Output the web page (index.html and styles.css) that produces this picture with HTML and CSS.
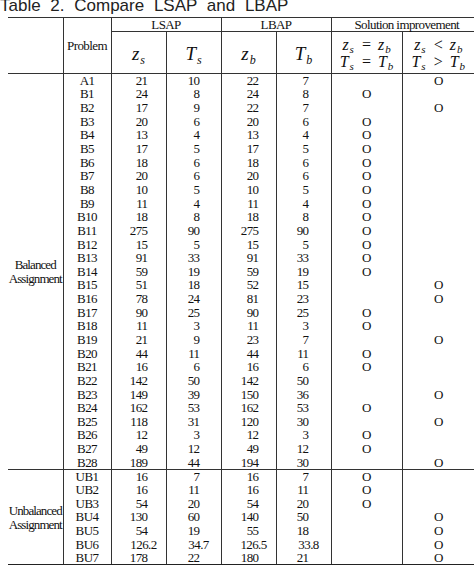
FILE: index.html
```html
<!DOCTYPE html>
<html>
<head>
<meta charset="utf-8">
<link rel="stylesheet" href="styles.css">
</head>
<body>
<div class="title">Table 2. Compare LSAP and LBAP</div>
<table class="tbl">
<colgroup>
<col class="c0"><col class="c1"><col class="cn"><col class="cn"><col class="cn"><col class="cn"><col class="c6"><col class="c7">
</colgroup>
<thead>
<tr class="h1">
<th class="blank" rowspan="2"></th>
<th class="prob" rowspan="2">Problem</th>
<th class="grp" colspan="2">LSAP</th>
<th class="grp" colspan="2">LBAP</th>
<th class="grp sol" colspan="2">Solution improvement</th>
</tr>
<tr class="h2">
<th class="var"><i>z</i><sub>s</sub></th>
<th class="var"><i>T</i><sub>s</sub></th>
<th class="var"><i>z</i><sub>b</sub></th>
<th class="var"><i>T</i><sub>b</sub></th>
<th class="eqc"><div class="eqn"><i>z</i><sub>s</sub><span class="op">=</span><i>z</i><sub>b</sub></div><div class="eqn"><i>T</i><sub>s</sub><span class="op">=</span><i>T</i><sub>b</sub></div></th>
<th class="eqc last"><div class="eqn"><i>z</i><sub>s</sub><span class="op">&lt;</span><i>z</i><sub>b</sub></div><div class="eqn"><i>T</i><sub>s</sub><span class="op">&gt;</span><i>T</i><sub>b</sub></div></th>
</tr>
</thead>
<tbody>
<tr><td class="label" rowspan="29">Balanced<br>Assignment</td><td>A1</td><td>21</td><td>10</td><td>22</td><td>7</td><td></td><td>O</td></tr>
<tr><td>B1</td><td>24</td><td>8</td><td>24</td><td>8</td><td>O</td><td></td></tr>
<tr><td>B2</td><td>17</td><td>9</td><td>22</td><td>7</td><td></td><td>O</td></tr>
<tr><td>B3</td><td>20</td><td>6</td><td>20</td><td>6</td><td>O</td><td></td></tr>
<tr><td>B4</td><td>13</td><td>4</td><td>13</td><td>4</td><td>O</td><td></td></tr>
<tr><td>B5</td><td>17</td><td>5</td><td>17</td><td>5</td><td>O</td><td></td></tr>
<tr><td>B6</td><td>18</td><td>6</td><td>18</td><td>6</td><td>O</td><td></td></tr>
<tr><td>B7</td><td>20</td><td>6</td><td>20</td><td>6</td><td>O</td><td></td></tr>
<tr><td>B8</td><td>10</td><td>5</td><td>10</td><td>5</td><td>O</td><td></td></tr>
<tr><td>B9</td><td>11</td><td>4</td><td>11</td><td>4</td><td>O</td><td></td></tr>
<tr><td>B10</td><td>18</td><td>8</td><td>18</td><td>8</td><td>O</td><td></td></tr>
<tr><td>B11</td><td>275</td><td>90</td><td>275</td><td>90</td><td>O</td><td></td></tr>
<tr><td>B12</td><td>15</td><td>5</td><td>15</td><td>5</td><td>O</td><td></td></tr>
<tr><td>B13</td><td>91</td><td>33</td><td>91</td><td>33</td><td>O</td><td></td></tr>
<tr><td>B14</td><td>59</td><td>19</td><td>59</td><td>19</td><td>O</td><td></td></tr>
<tr><td>B15</td><td>51</td><td>18</td><td>52</td><td>15</td><td></td><td>O</td></tr>
<tr><td>B16</td><td>78</td><td>24</td><td>81</td><td>23</td><td></td><td>O</td></tr>
<tr><td>B17</td><td>90</td><td>25</td><td>90</td><td>25</td><td>O</td><td></td></tr>
<tr><td>B18</td><td>11</td><td>3</td><td>11</td><td>3</td><td>O</td><td></td></tr>
<tr><td>B19</td><td>21</td><td>9</td><td>23</td><td>7</td><td></td><td>O</td></tr>
<tr><td>B20</td><td>44</td><td>11</td><td>44</td><td>11</td><td>O</td><td></td></tr>
<tr><td>B21</td><td>16</td><td>6</td><td>16</td><td>6</td><td>O</td><td></td></tr>
<tr><td>B22</td><td>142</td><td>50</td><td>142</td><td>50</td><td></td><td></td></tr>
<tr><td>B23</td><td>149</td><td>39</td><td>150</td><td>36</td><td></td><td>O</td></tr>
<tr><td>B24</td><td>162</td><td>53</td><td>162</td><td>53</td><td>O</td><td></td></tr>
<tr><td>B25</td><td>118</td><td>31</td><td>120</td><td>30</td><td></td><td>O</td></tr>
<tr><td>B26</td><td>12</td><td>3</td><td>12</td><td>3</td><td>O</td><td></td></tr>
<tr><td>B27</td><td>49</td><td>12</td><td>49</td><td>12</td><td>O</td><td></td></tr>
<tr><td>B28</td><td>189</td><td>44</td><td>194</td><td>30</td><td></td><td>O</td></tr>
<tr class="sep"><td class="label" rowspan="7">Unbalanced<br>Assignment</td><td>UB1</td><td>16</td><td>7</td><td>16</td><td>7</td><td>O</td><td></td></tr>
<tr><td>UB2</td><td>16</td><td>11</td><td>16</td><td>11</td><td>O</td><td></td></tr>
<tr><td>UB3</td><td>54</td><td>20</td><td>54</td><td>20</td><td>O</td><td></td></tr>
<tr><td>BU4</td><td>130</td><td>60</td><td>140</td><td>50</td><td></td><td>O</td></tr>
<tr><td>BU5</td><td>54</td><td>19</td><td>55</td><td>18</td><td></td><td>O</td></tr>
<tr class="decrow"><td>BU6</td><td>126.2</td><td>34.7</td><td>126.5</td><td>33.8</td><td></td><td>O</td></tr>
<tr><td>BU7</td><td>178</td><td>22</td><td>180</td><td>21</td><td></td><td>O</td></tr>
</tbody>
</table>
</body>
</html>
```

FILE: styles.css
```css
html, body {
  margin: 0;
  padding: 0;
  background: #ffffff;
}

body {
  width: 474px;
  height: 565px;
  overflow: hidden;
  font-family: "Liberation Serif", "Times New Roman", serif;
  color: #111111;
}

.title {
  margin: -3px 0 0 0;
  height: 20px;
  line-height: 17px;
  font-family: "Liberation Sans", Arial, sans-serif;
  font-size: 17px;
  word-spacing: 5px;
  color: #222222;
  white-space: nowrap;
}

.tbl {
  margin-left: 8px;
  width: 466px;
  table-layout: fixed;
  border-collapse: collapse;
  border-top: 1px solid #333333;
  border-bottom: 2px solid #222222;
  font-size: 13px;
  letter-spacing: -0.6px;
}

.c0 { width: 55px; }
.c1 { width: 48px; }
.cn { width: 55px; }
.c6 { width: 71px; }
.c7 { width: 72px; }

.tbl th,
.tbl td {
  padding: 0;
  font-weight: normal;
  text-align: center;
  vertical-align: middle;
  white-space: nowrap;
}

/* header */
.h1 { height: 14px; }
.h2 { height: 42px; }

.tbl thead th {
  border-right: 1px solid #333333;
  border-bottom: 1px solid #333333;
  line-height: 13px;
}

.tbl thead th.last,
.tbl thead th.sol {
  border-right: none;
}

.sol {
  padding-left: 8px !important;
}

.var {
  font-size: 19px;
  letter-spacing: 0;
  padding-top: 2px !important;
}

.var i,
.eqn i {
  font-style: italic;
}

.tbl sub {
  font-size: 12px;
  font-style: italic;
  vertical-align: -4px;
  line-height: 0;
  margin-left: 1px;
}

.eqc {
  letter-spacing: 0;
}

.eqn {
  font-size: 16px;
  line-height: 17px;
  height: 17px;
}

.eqn sub {
  font-size: 11px;
  vertical-align: -3px;
}

.op {
  font-style: normal;
  margin: 0 7px 0 8px;
}

/* body */
.tbl tbody tr {
  height: 13.65px;
}

.tbl tbody td {
  line-height: 13px;
  border-right: 1px solid #333333;
}

.tbl tbody td:last-child {
  border-right: none;
}

.tbl tbody td.label {
  letter-spacing: -0.9px;
  line-height: 14px;
  padding-top: 2px;
}

.tbl tbody td:nth-last-child(6) { text-align: right; padding-right: 18px; }
.tbl tbody td:nth-last-child(5) { text-align: right; padding-right: 21px; }
.tbl tbody td:nth-last-child(4) { text-align: right; padding-right: 17px; }
.tbl tbody td:nth-last-child(3) { text-align: right; padding-right: 22px; }

.tbl tbody tr.decrow td:nth-last-child(6),
.tbl tbody tr.decrow td:nth-last-child(5),
.tbl tbody tr.decrow td:nth-last-child(4),
.tbl tbody tr.decrow td:nth-last-child(3) {
  text-align: center;
  padding-right: 0;
  padding-left: 10px;
}

.tbl tbody tr.sep td {
  border-top: 1px solid #333333;
}
```
